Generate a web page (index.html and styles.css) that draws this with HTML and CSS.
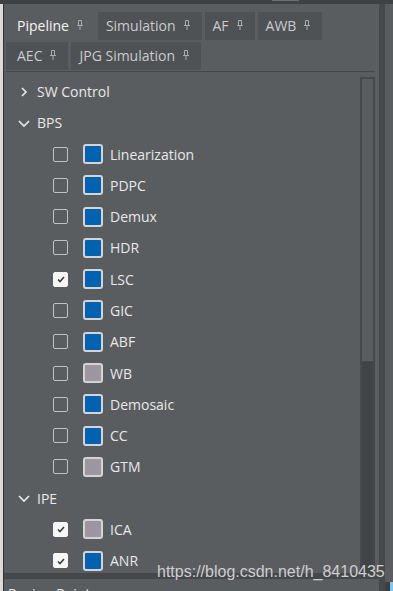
FILE: index.html
```html
<!DOCTYPE html>
<html>
<head>
<meta charset="utf-8">
<link rel="stylesheet" href="styles.css">
</head>
<body>
<div class="screen">
  <div class="topbar"><span class="topbar-mark"></span></div>
  <div class="main">
    <div class="edge"></div>
    <div class="panel">
      <div class="tabs">
        <div class="tab-row">
          <div class="tab first active"><span>Pipeline</span><svg class="pin" width="6" height="10" viewBox="0 0 6 10"><path d="M1.5 0.5h3v5h-3z M0 5.5h6 M3 5.5v4.5"/></svg></div>
          <div class="tab"><span>Simulation</span><svg class="pin" width="6" height="10" viewBox="0 0 6 10"><path d="M1.5 0.5h3v5h-3z M0 5.5h6 M3 5.5v4.5"/></svg></div>
          <div class="tab"><span>AF</span><svg class="pin" width="6" height="10" viewBox="0 0 6 10"><path d="M1.5 0.5h3v5h-3z M0 5.5h6 M3 5.5v4.5"/></svg></div>
          <div class="tab"><span>AWB</span><svg class="pin" width="6" height="10" viewBox="0 0 6 10"><path d="M1.5 0.5h3v5h-3z M0 5.5h6 M3 5.5v4.5"/></svg></div>
        </div>
        <div class="tab-row">
          <div class="tab first"><span>AEC</span><svg class="pin" width="6" height="10" viewBox="0 0 6 10"><path d="M1.5 0.5h3v5h-3z M0 5.5h6 M3 5.5v4.5"/></svg></div>
          <div class="tab"><span>JPG Simulation</span><svg class="pin" width="6" height="10" viewBox="0 0 6 10"><path d="M1.5 0.5h3v5h-3z M0 5.5h6 M3 5.5v4.5"/></svg></div>
        </div>
      </div>
      <div class="content">
        <div class="tree">
          <div class="row group"><svg class="chev" width="14" height="14" viewBox="0 0 14 14"><path d="M5 3L9 7L5 11"/></svg><span>SW Control</span></div>
          <div class="row group"><svg class="chev" width="14" height="14" viewBox="0 0 14 14"><path d="M2 5L7 10L12 5"/></svg><span>BPS</span></div>
          <div class="row item"><span class="cb"></span><span class="swatch"></span><span>Linearization</span></div>
          <div class="row item"><span class="cb"></span><span class="swatch"></span><span>PDPC</span></div>
          <div class="row item"><span class="cb"></span><span class="swatch"></span><span>Demux</span></div>
          <div class="row item"><span class="cb"></span><span class="swatch"></span><span>HDR</span></div>
          <div class="row item"><span class="cb checked"><svg width="12" height="12" viewBox="0 0 12 12"><path d="M3 6.5L5 8.5L9 4"/></svg></span><span class="swatch"></span><span>LSC</span></div>
          <div class="row item"><span class="cb"></span><span class="swatch"></span><span>GIC</span></div>
          <div class="row item"><span class="cb"></span><span class="swatch"></span><span>ABF</span></div>
          <div class="row item"><span class="cb"></span><span class="swatch gray"></span><span>WB</span></div>
          <div class="row item"><span class="cb"></span><span class="swatch"></span><span>Demosaic</span></div>
          <div class="row item"><span class="cb"></span><span class="swatch"></span><span>CC</span></div>
          <div class="row item"><span class="cb"></span><span class="swatch gray"></span><span>GTM</span></div>
          <div class="row group"><svg class="chev" width="14" height="14" viewBox="0 0 14 14"><path d="M2 5L7 10L12 5"/></svg><span>IPE</span></div>
          <div class="row item"><span class="cb checked"><svg width="12" height="12" viewBox="0 0 12 12"><path d="M3 6.5L5 8.5L9 4"/></svg></span><span class="swatch gray"></span><span>ICA</span></div>
          <div class="row item"><span class="cb checked"><svg width="12" height="12" viewBox="0 0 12 12"><path d="M3 6.5L5 8.5L9 4"/></svg></span><span class="swatch"></span><span>ANR</span></div>
        </div>
        <div class="scrollbar"><div class="thumb"></div></div>
      </div>
      <div class="band"></div>
      <div class="bottom-panel"><span>Region Point</span></div>
    </div>
    <div class="splitter"></div>
    <div class="side"><div class="side-fill"></div><div class="side-foot"><span class="side-blue"></span></div></div>
  </div>
  <div class="watermark">https://blog.csdn.net/h_8410435</div>
</div>
</body>
</html>
```
FILE: styles.css
```css
html, body {
  margin: 0;
  padding: 0;
  background: #5a5d60;
  overflow: hidden;
}

.screen {
  position: relative;
  width: 393px;
  height: 591px;
  display: flex;
  flex-direction: column;
  background: #5a5d60;
  overflow: hidden;
  font-family: "Open Sans", "Noto Sans", sans-serif;
}

.topbar {
  height: 4px;
  flex: none;
  display: flex;
  background: #3f4244;
}

.topbar-mark {
  margin-left: 272px;
  width: 27px;
  height: 1px;
  background: #6e7275;
}

.main {
  flex: 1;
  display: flex;
  min-height: 0;
}

.edge {
  width: 3px;
  flex: none;
  background: #dadada;
  border-right: 1px solid #2f3133;
}

.panel {
  flex: 1;
  min-width: 0;
  display: flex;
  flex-direction: column;
}

.tabs {
  flex: none;
  margin: 0 4px 0 2px;
  padding: 8px 0 1px 0;
  border-bottom: 1px solid #46494c;
  display: flex;
  flex-direction: column;
  gap: 2px;
}

.tab-row {
  display: flex;
  gap: 3px;
  height: 28px;
}

.tab {
  display: flex;
  align-items: center;
  gap: 8px;
  padding: 0 12px 2px 8px;
  background: #4e5254;
  color: #c9cbcd;
  font-size: 14px;
  line-height: 19px;
}

.tab.first {
  padding-left: 11px;
}

.tab.active {
  background: transparent;
  color: #f4f4f4;
}

.pin path {
  fill: none;
  stroke: #a9abad;
  stroke-width: 1;
}

.content {
  flex: 1;
  min-height: 0;
  display: flex;
}

.tree {
  flex: 1;
  min-width: 0;
  padding-top: 4px;
  overflow: hidden;
}

.row {
  height: 31.27px;
  display: flex;
  align-items: center;
  color: #e8e8e8;
  font-size: 14px;
  line-height: 19px;
  white-space: nowrap;
}

.row.group {
  padding-left: 13px;
}

.row.item {
  padding-left: 49px;
}

.chev {
  flex: none;
  margin-right: 6px;
}

.chev path {
  fill: none;
  stroke: #e6e6e6;
  stroke-width: 1.7;
}

.cb {
  flex: none;
  width: 15px;
  height: 15px;
  box-sizing: border-box;
  border: 1.5px solid #c2c2c2;
  border-radius: 2px;
  margin-right: 15px;
  display: flex;
  align-items: center;
  justify-content: center;
}

.cb.checked {
  background: #f6f6f6;
  border-color: #f6f6f6;
}

.cb svg path {
  fill: none;
  stroke: #3a3c3e;
  stroke-width: 1.6;
}

.swatch {
  flex: none;
  width: 20px;
  height: 20px;
  box-sizing: border-box;
  border: 2px solid #d4d4d4;
  border-radius: 3px;
  background: #0062b1;
  margin-right: 7px;
}

.swatch.gray {
  background: #9b96a0;
}

.scrollbar {
  flex: none;
  width: 15px;
  margin: 5px 4px 0 0;
  box-sizing: border-box;
  border: 2px solid #45494b;
  border-bottom: none;
  background: #404446;
}

.thumb {
  height: 282px;
  background: #5a5d60;
  border-bottom: 1px solid #45494b;
}

.band {
  flex: none;
  height: 6px;
  background: #45484a;
  margin-right: -1px;
}

.bottom-panel {
  flex: none;
  height: 12px;
  overflow: hidden;
  padding: 5px 0 0 4px;
  box-sizing: border-box;
  color: #e6e6e6;
  font-size: 14px;
  line-height: 19px;
  white-space: nowrap;
}

.splitter {
  flex: none;
  width: 6px;
  background: #45494b;
}

.side {
  flex: none;
  width: 8px;
  display: flex;
  flex-direction: column;
}

.side-fill {
  flex: 1;
}

.side-foot {
  flex: none;
  height: 9px;
  background: #3c3f41;
  display: flex;
  justify-content: flex-end;
}

.side-blue {
  width: 3px;
  background: #7cc8ee;
}

.watermark {
  position: absolute;
  left: 157px;
  top: 563px;
  font-family: "Liberation Sans", Arial, sans-serif;
  font-size: 16px;
  line-height: 18px;
  color: #cdcecf;
  white-space: nowrap;
}
```
